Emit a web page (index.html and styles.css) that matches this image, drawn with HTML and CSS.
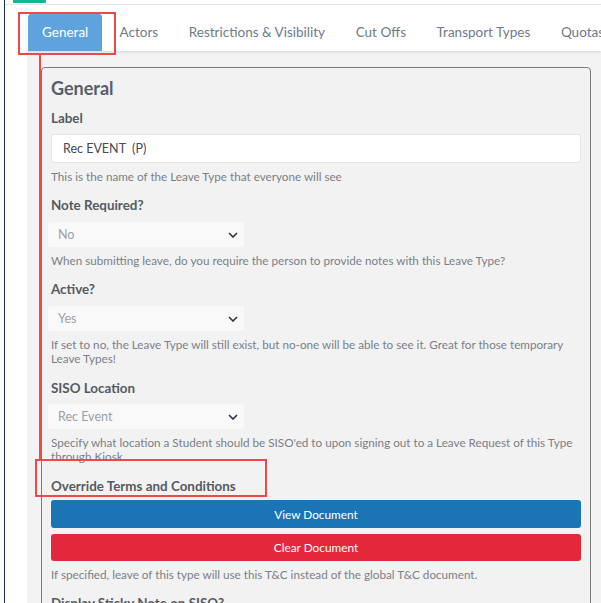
FILE: index.html
```html
<!DOCTYPE html>
<html>
<head>
<meta charset="utf-8">
<link rel="stylesheet" href="styles.css">
</head>
<body>
<div class="app">
  <div class="rail"></div>
  <div class="main">
    <div class="topbar"><span class="top-active"></span></div>
    <div class="page">
      <nav class="tabs">
        <a class="tab active">General</a>
        <a class="tab">Actors</a>
        <a class="tab">Restrictions &amp; Visibility</a>
        <a class="tab">Cut Offs</a>
        <a class="tab">Transport Types</a>
        <a class="tab">Quotas</a>
      </nav>
      <div class="panel">
        <section class="card">
          <h2 class="card-title">General</h2>

          <div class="field field-first">
            <label class="field-label">Label</label>
            <div class="input">Rec EVENT&nbsp; (P)</div>
            <p class="help">This is the name of the Leave Type that everyone will see</p>
          </div>

          <div class="field">
            <label class="field-label">Note Required?</label>
            <div class="select"><span>No</span><svg class="chev" viewBox="0 0 10 6" width="10" height="6"><path d="M1 1l4 4 4-4" fill="none" stroke="#2b3448" stroke-width="1.6"/></svg></div>
            <p class="help">When submitting leave, do you require the person to provide notes with this Leave Type?</p>
          </div>

          <div class="field">
            <label class="field-label">Active?</label>
            <div class="select"><span>Yes</span><svg class="chev" viewBox="0 0 10 6" width="10" height="6"><path d="M1 1l4 4 4-4" fill="none" stroke="#2b3448" stroke-width="1.6"/></svg></div>
            <p class="help">If set to no, the Leave Type will still exist, but no-one will be able to see it. Great for those temporary Leave Types!</p>
          </div>

          <div class="field field-siso">
            <label class="field-label">SISO Location</label>
            <div class="select"><span>Rec Event</span><svg class="chev" viewBox="0 0 10 6" width="10" height="6"><path d="M1 1l4 4 4-4" fill="none" stroke="#2b3448" stroke-width="1.6"/></svg></div>
            <p class="help">Specify what location a Student should be SISO'ed to upon signing out to a Leave Request of this Type through Kiosk</p>
          </div>

          <div class="field field-tc">
            <label class="field-label label-tc">Override Terms and Conditions</label>
            <button class="btn btn-blue">View Document</button>
            <button class="btn btn-red">Clear Document</button>
            <p class="help help-tc">If specified, leave of this type will use this T&amp;C instead of the global T&amp;C document.</p>
          </div>

          <div class="field">
            <label class="field-label">Display Sticky Note on SISO?</label>
            <div class="select"><span>No</span><svg class="chev" viewBox="0 0 10 6" width="10" height="6"><path d="M1 1l4 4 4-4" fill="none" stroke="#2b3448" stroke-width="1.6"/></svg></div>
          </div>
        </section>
      </div>
    </div>
  </div>
</div>
<div class="mark mark-tab"></div>
<div class="mark mark-line"></div>
<div class="mark mark-tc"></div>
</body>
</html>
```

FILE: styles.css
```css
* { box-sizing: border-box; }
html, body { margin: 0; padding: 0; background: #fff; overflow: hidden; }
body { font-family: Lato, "Open Sans", "Liberation Sans", sans-serif; width: 601px; height: 603px; position: relative; }

.app { display: flex; height: 603px; }
.rail { width: 5px; border-right: 1px solid #1f2d3d; flex: none; }
.main { flex: 1; display: flex; flex-direction: column; min-width: 0; overflow: hidden; }

.topbar { height: 5px; border-bottom: 1px solid #e9e9e9; flex: none; }
.top-active { display: block; width: 33px; height: 3px; margin-left: 8px; background: #1ab394; }

.page { flex: 1; padding-left: 22px; display: flex; flex-direction: column; min-height: 0; }

.tabs { display: flex; gap: 4px; padding: 9px 0 0 1px; height: 46px; background: #fff; white-space: nowrap; box-shadow: 0 1px 3px rgba(0,0,0,0.12); position: relative; z-index: 1; flex: none; }
.tab { display: flex; align-items: center; padding: 0 13.3px 2px; height: 37px; font-size: 13.5px; color: #6d7a8c; border-radius: 3px 3px 0 0; }
.tab.active { background: #5ea3dd; color: #fff; padding: 0 14px 2px; }

.panel { flex: 1; background: #f3f3f3; padding: 16px 10px 0 14px; min-height: 0; }

.card { border: 1px solid #7a7a7a; border-radius: 4px; background: #f2f2f2; padding: 8px 9px 20px 9px; }
.card-title { margin: 0; font-size: 18px; line-height: 24px; font-weight: 700; color: #565e6b; }

.field { display: flex; flex-direction: column; align-items: stretch; }
.field-first { margin-top: 8px; }
.field + .field { margin-top: 12px; }
.field-siso.field { margin-top: 13px; }
.field-tc.field { margin-top: 13px; }
.field-label { font-size: 13.4px; line-height: 20px; font-weight: 700; color: #545a63; margin-bottom: 6px; }
.field-siso .field-label { margin-bottom: 5px; }
.label-tc { margin-bottom: 4px; }

.input { height: 29px; background: #fff; border: 1px solid #e4e4e4; border-radius: 3px; padding: 0 11px; font-size: 12.5px; line-height: 27px; color: #454b55; }

.select { display: flex; align-items: center; justify-content: space-between; width: 196px; height: 25px; margin-left: -3px; margin-top: 1px; background: #f9f9f9; border-radius: 3px; padding: 0 6px 0 10px; font-size: 12.5px; color: #9a9ea5; }
.chev { display: block; }

.help { margin: 6px 0 0; font-size: 11.7px; line-height: 14px; color: #7a7f87; }
.help-tc { margin-top: 6px; }

.btn { display: block; width: 100%; height: 28px; border: 0; border-radius: 3px; font-family: inherit; font-size: 11.8px; color: #fff; padding: 0; }
.btn-blue { background: #1b75b5; }
.btn-red { background: #e3283c; margin-top: 6px; height: 27px; }

.mark { position: absolute; z-index: 5; }
.mark-tab { left: 18px; top: 12px; width: 98px; height: 43px; border: 2px solid #f04848; }
.mark-line { left: 39px; top: 55px; width: 2px; height: 405px; background: #f04848; }
.mark-tc { left: 35px; top: 459px; width: 232px; height: 38px; border: 2px solid #f04848; }
```
